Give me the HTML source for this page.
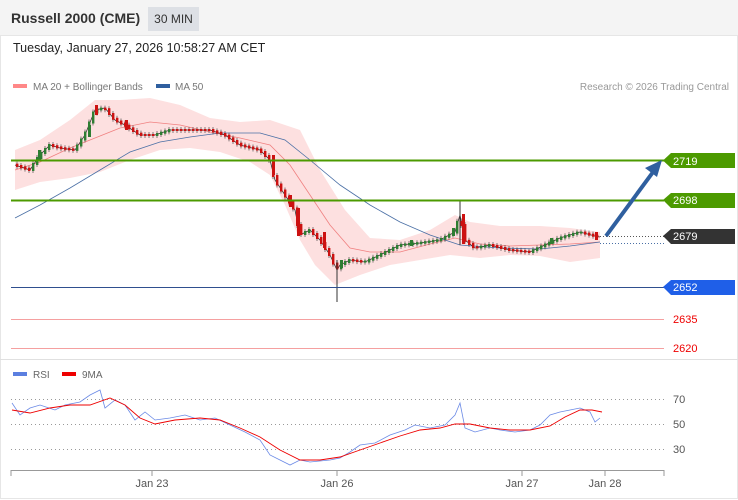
<!DOCTYPE html>
<html><head><meta charset="utf-8"><style>
body{margin:0;width:738px;height:500px;background:#fff;font-family:"Liberation Sans",sans-serif;overflow:hidden;position:relative}
.hdr{position:absolute;left:0;top:0;width:738px;height:35px;background:#f4f4f4}
.t{position:absolute;left:11px;top:10px;font-size:14px;font-weight:bold;color:#333}
.tf{position:absolute;left:148px;top:7px;width:51px;height:24px;background:#dde0e5;font-size:12px;color:#333;text-align:center;line-height:24px}
.dt{position:absolute;left:13px;top:41px;font-size:12.5px;color:#222}
</style></head><body>
<div class="hdr"></div><div class="t">Russell 2000 (CME)</div><div class="tf">30 MIN</div>
<div class="dt">Tuesday, January 27, 2026 10:58:27 AM CET</div>
<svg id="s" width="738" height="500" style="position:absolute;left:0;top:0" font-family="Liberation Sans, sans-serif">
<rect x="0.5" y="35.5" width="737" height="463" fill="none" stroke="#e6e6e6"/>
<line x1="0" y1="359.5" x2="738" y2="359.5" stroke="#e0e0e0"/>
<rect x="13" y="84" width="14" height="4" fill="#f88"/><text x="33" y="90" font-size="10" fill="#777">MA 20 + Bollinger Bands</text>
<rect x="156" y="84" width="14" height="4" fill="#2f5f9f"/><text x="175" y="90" font-size="10" fill="#777">MA 50</text>
<text x="729" y="90" font-size="10" fill="#999" text-anchor="end">Research © 2026 Trading Central</text>
<polygon fill="#fde0e0" points="15,150 40,140 70,120 95,100 120,100 150,98 180,105 210,118 240,122 270,120 300,130 320,170 345,210 370,238 400,240 430,230 455,215 470,222 500,226 540,226 570,228 600,232 600,258 570,262 540,256 510,255 480,258 450,255 420,260 390,265 360,275 335,285 315,265 300,240 285,205 270,175 250,162 220,152 190,148 160,150 130,160 100,172 70,178 40,182 15,190"/>
<polyline fill="none" stroke="#f08080" stroke-width="0.8" points="15,170 40,162 70,148 95,138 120,128 150,122 180,125 210,132 240,138 270,145 290,165 310,195 330,225 350,248 370,252 400,252 430,244 455,238 480,244 510,246 540,245 570,244 600,242"/>
<polyline fill="none" stroke="#4a6fa5" stroke-width="0.8" points="15,218 40,205 70,188 100,170 130,152 160,142 190,137 220,133 260,133 285,140 310,160 340,185 370,205 400,222 430,235 460,245 500,248 540,249 570,246 600,242"/>
<polyline id="pl" fill="none" stroke="#333" stroke-width="0.8" points="15,165 30,170 40,155 50,145 60,148 75,150 85,135 95,110 105,108 115,120 125,125 140,135 155,135 170,130 190,130 210,130 225,135 240,145 260,150 270,160 275,180 285,195 295,210 300,235 310,230 320,240 330,255 337,270 340,265 350,260 365,262 380,255 400,245 420,243 440,240 455,232 460,215 465,240 475,248 490,245 510,250 530,252 545,245 560,238 580,232 595,236 600,237"/>
<g id="cd"></g>
<line x1="337" y1="260" x2="337" y2="302" stroke="#333"/><line x1="460" y1="200" x2="460" y2="245" stroke="#333"/>
<g fill="#cc1111"><rect x="95" y="105" width="3" height="10"/><rect x="272" y="155" width="3" height="20"/><rect x="289" y="195" width="3" height="12"/><rect x="297" y="208" width="3" height="28"/><rect x="323" y="232" width="3" height="16"/><rect x="462" y="214" width="3" height="30"/><rect x="595" y="232" width="3" height="8"/><rect x="125" y="120" width="3" height="10"/></g>
<g fill="#2e7d32"><rect x="38" y="150" width="3" height="10"/><rect x="88" y="125" width="3" height="12"/><rect x="340" y="260" width="3" height="8"/><rect x="410" y="240" width="3" height="6"/><rect x="452" y="228" width="3" height="8"/><rect x="550" y="238" width="3" height="6"/></g>
<line x1="11" y1="160.5" x2="664" y2="160.5" stroke="#4c9a00" stroke-width="2"/>
<line x1="11" y1="200.5" x2="664" y2="200.5" stroke="#4c9a00" stroke-width="2"/>
<line x1="11" y1="287.5" x2="664" y2="287.5" stroke="#2f4f8f"/>
<line x1="11" y1="319.5" x2="664" y2="319.5" stroke="#f5a0a0"/>
<line x1="11" y1="348.5" x2="664" y2="348.5" stroke="#f5a0a0"/>
<line x1="600" y1="236.5" x2="664" y2="236.5" stroke="#555" stroke-dasharray="1,2"/>
<line x1="600" y1="243.5" x2="664" y2="243.5" stroke="#4a6fa5" stroke-dasharray="1,2"/>
<line x1="606" y1="236" x2="656" y2="168" stroke="#2f5f9f" stroke-width="4"/>
<polygon points="662,160 645,168 657,177" fill="#2f5f9f"/>
<g font-size="11" fill="#fff">
<polygon points="663,160.5 671,153 735,153 735,168 671,168" fill="#4c9a00"/><text x="673" y="165">2719</text>
<polygon points="663,200 671,193 735,193 735,208 671,208" fill="#4c9a00"/><text x="673" y="204">2698</text>
<polygon points="663,236 671,229 735,229 735,244 671,244" fill="#333"/><text x="673" y="240">2679</text>
<polygon points="663,287 671,280 735,280 735,295 671,295" fill="#1f5fe8"/><text x="673" y="291">2652</text>
</g>
<text x="673" y="323" font-size="11" fill="#e00">2635</text><text x="673" y="352" font-size="11" fill="#e00">2620</text>
<rect x="13" y="372" width="14" height="4" fill="#5b7fe0"/><text x="33" y="378" font-size="10" fill="#666">RSI</text>
<rect x="62" y="372" width="14" height="4" fill="#e00"/><text x="82" y="378" font-size="10" fill="#666">9MA</text>
<g stroke="#999" stroke-dasharray="1,3"><line x1="11" y1="399.5" x2="664" y2="399.5"/><line x1="11" y1="424.5" x2="664" y2="424.5"/><line x1="11" y1="449.5" x2="664" y2="449.5"/></g>
<g font-size="11" fill="#555"><text x="673" y="403">70</text><text x="673" y="428">50</text><text x="673" y="453">30</text></g>
<polyline fill="none" stroke="#6b8ae6" stroke-width="0.8" points="12,403 20,415 30,408 40,405 55,410 65,405 80,402 90,395 100,390 105,408 115,400 125,405 135,420 145,412 155,420 170,418 185,415 200,420 215,418 230,425 245,432 260,440 270,455 280,460 290,465 300,460 310,462 330,460 340,458 350,452 360,445 375,443 390,435 405,430 415,425 430,428 445,425 455,415 460,403 465,428 475,432 490,428 500,430 515,432 530,430 540,425 550,415 560,412 570,410 580,408 590,412 595,422 600,418"/>
<polyline fill="none" stroke="#e00" stroke-width="0.9" points="12,410 30,413 50,408 70,405 90,405 110,398 125,405 140,418 155,424 175,420 200,418 220,420 240,428 260,437 280,450 300,460 320,460 340,457 360,450 380,443 400,436 420,430 440,428 455,424 470,424 490,428 510,430 530,430 550,426 565,417 580,410 592,410 602,412"/>
<line x1="11" y1="470.5" x2="664" y2="470.5" stroke="#999"/>
<g stroke="#999"><line x1="11" y1="470" x2="11" y2="476"/><line x1="152" y1="470" x2="152" y2="476"/><line x1="337" y1="470" x2="337" y2="476"/><line x1="522" y1="470" x2="522" y2="476"/><line x1="605" y1="470" x2="605" y2="476"/><line x1="664" y1="470" x2="664" y2="476"/></g>
<g font-size="11" fill="#555" text-anchor="middle"><text x="152" y="487">Jan 23</text><text x="337" y="487">Jan 26</text><text x="522" y="487">Jan 27</text><text x="605" y="487">Jan 28</text></g>
</svg>
<script>
(function(){var p=document.getElementById('pl').getAttribute('points').trim().split(/\s+/).map(function(s){return s.split(',').map(Number)});
function y(x){for(var i=1;i<p.length;i++){if(x<=p[i][0]){var a=p[i-1],b=p[i];return a[1]+(b[1]-a[1])*(x-a[0])/(b[0]-a[0]);}}return p[p.length-1][1];}
var g=document.getElementById('cd'),h='';
for(var x=16;x<600;x+=4){var y0=y(x-2),y1=y(x+2),up=y1<y0;var top=Math.min(y0,y1)-1,hh=Math.max(2,Math.abs(y1-y0)+2);
h+='<line x1="'+(x+1)+'" y1="'+(top-2)+'" x2="'+(x+1)+'" y2="'+(top+hh+2)+'" stroke="#333" stroke-width="0.6"/>';
h+='<rect x="'+x+'" y="'+top+'" width="2.4" height="'+hh+'" fill="'+(up?'#2e7d32':'#cc1111')+'"/>';}
g.innerHTML=h;})();
</script>
</body></html>
